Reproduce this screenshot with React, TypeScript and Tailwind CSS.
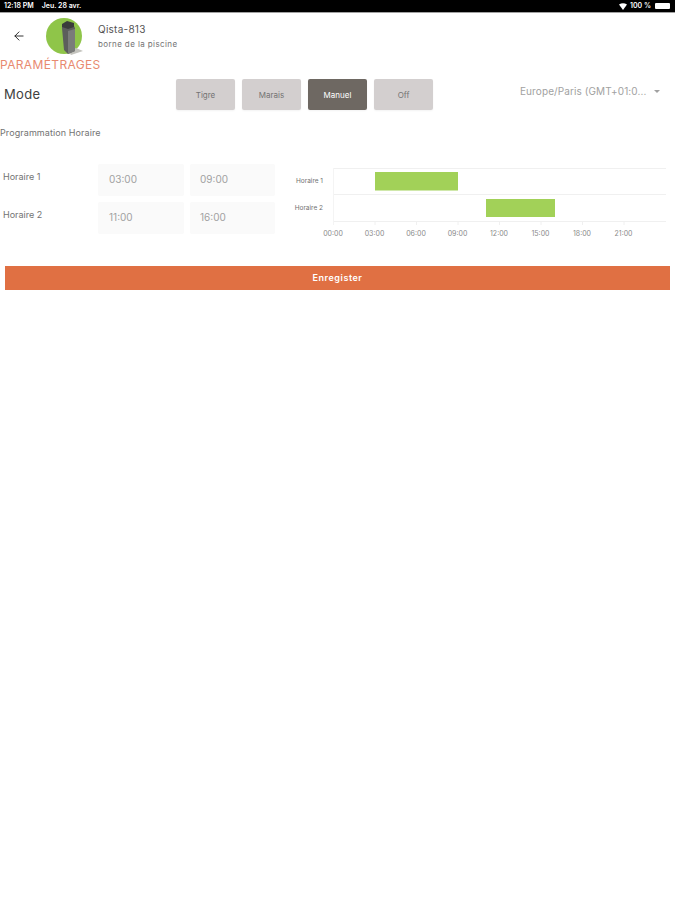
import { ArrowLeft } from "lucide-react";

const modes = [
  { label: "Tigre", active: false },
  { label: "Marais", active: false },
  { label: "Manuel", active: true },
  { label: "Off", active: false },
];

const slots = [
  { label: "Horaire 1", start: "03:00", end: "09:00" },
  { label: "Horaire 2", start: "11:00", end: "16:00" },
];

const ticks = ["00:00", "03:00", "06:00", "09:00", "12:00", "15:00", "18:00", "21:00"];

const StatusBar = () => (
  <div className="h-[13px] bg-black border-b border-neutral-400 flex items-center justify-between pl-1 pr-[5px] text-white text-[7px] font-semibold">
    <div className="flex gap-2">
      <span>12:18 PM</span>
      <span>Jeu. 28 avr.</span>
    </div>
    <div className="flex items-center gap-[3px]">
      <svg width="8" height="7" viewBox="0 0 8 7">
        <path d="M0 1.5 Q4 -1 8 1.5 L4 7 Z" fill="#fff" />
      </svg>
      <span>100 %</span>
      <div className="w-[15px] h-[6px] bg-white rounded-[1px] ml-[1px]" />
    </div>
  </div>
);

const Tower = () => (
  <div className="relative w-9 h-9 rounded-full bg-[#8fc549]">
    <svg className="absolute left-[14px] top-[3px]" width="24" height="36" viewBox="0 0 24 36">
      <path d="M8 30 L16 27 L23 30 L11 34 Z" fill="#c4c4be" />
      <path d="M2 7 L2 4 L13 3 L15 7 L15 30 L8 33 L4 29 Z" fill="#5c5e5c" />
      <path d="M8 10 L15 8 L15 30 L8 33 Z" fill="#7a7c7a" />
      <path d="M2 3 L7 0 L14 2 L14 6 L8 8 L2 6 Z" fill="#3a3c3b" />
    </svg>
  </div>
);

const Chart = () => (
  <svg width="380" height="76" viewBox="0 0 380 76" className="shrink-0 font-['Inter',sans-serif]">
    {[0, 26, 53].map((y) => (
      <line key={y} x1="42" x2="375" y1={y + 0.5} y2={y + 0.5} stroke="#f0f0f0" />
    ))}
    {[0, 1, 2, 3, 4, 5, 6, 7].map((i) => (
      <line key={i} x1={42.5 + i * 41.5} x2={42.5 + i * 41.5} y1="53" y2="57" stroke="#f0f0f0" />
    ))}
    <line x1="42.5" x2="42.5" y1="0" y2="57" stroke="#f4f4f4" />
    <rect x="84" y="4" width="83" height="18.5" fill="#a2d158" />
    <rect x="195" y="31" width="69" height="18" fill="#a2d158" />
    <text x="32" y="15" textAnchor="end" fontSize="6.5" fill="#707070">Horaire 1</text>
    <text x="32" y="42" textAnchor="end" fontSize="6.5" fill="#707070">Horaire 2</text>
    {ticks.map((t, i) => (
      <text key={t} x={42 + i * 41.5} y="68" textAnchor="middle" fontSize="7" fill="#8a8a8a">
        {t}
      </text>
    ))}
  </svg>
);

const App = () => {
  return (
    <div className="w-[675px] h-[900px] bg-white overflow-hidden font-['Inter',sans-serif]">
      <StatusBar />

      <div className="flex items-center h-[45px] pt-[1px]">
        <ArrowLeft className="ml-3 text-neutral-900 -mt-[1px]" size={14} strokeWidth={1.5} />
        <div className="ml-[20px] mr-4">
          <Tower />
        </div>
        <div className="flex flex-col gap-[3px] -mt-[1px]">
          <span className="text-[10px] leading-[14px] text-neutral-600 tracking-wide">Qista-813</span>
          <span className="text-[8px] leading-[10px] text-neutral-500 tracking-[0.05em]">borne de la piscine</span>
        </div>
      </div>

      <p className="text-[12px] leading-[14px] text-[#e88a70] tracking-[0.03em]">PARAMÉTRAGES</p>

      <div className="flex items-center h-[31px] mt-[7px]">
        <span className="w-[176px] pl-1 text-[13px] text-neutral-700 tracking-wide">Mode</span>
        <div className="flex gap-[7px]">
          {modes.map((m) => (
            <div
              key={m.label}
              className={
                m.active
                  ? "w-[59px] h-[31px] rounded-[2px] bg-[#6e6862] text-white text-[8px] flex items-center justify-center shadow-xs"
                  : "w-[59px] h-[31px] rounded-[2px] bg-[#d3cfcf] text-neutral-500 text-[8px] flex items-center justify-center shadow-xs"
              }
            >
              {m.label}
            </div>
          ))}
        </div>
        <div className="ml-[87px] flex items-center gap-2 -mt-[6px]">
          <span className="text-[10px] text-neutral-400 whitespace-nowrap tracking-[0.01em]">Europe/Paris (GMT+01:0...</span>
          <div className="w-0 h-0 border-x-[3px] border-x-transparent border-t-[3px] border-t-neutral-400" />
        </div>
      </div>

      <p className="mt-[17px] text-[9px] leading-[12px] text-neutral-500 tracking-[0.01em]">Programmation Horaire</p>

      <div className="flex mt-[25px]">
        <div className="flex flex-col gap-[6px] w-[291px] shrink-0 pl-[3px]">
          {slots.map((s) => (
            <div key={s.label} className="flex">
              <span className="w-[95px] text-[9px] leading-[12px] text-neutral-500 mt-[7px]">{s.label}</span>
              <div className="flex gap-[6px]">
                <div className="w-[86px] h-[32px] rounded-[2px] bg-[#fafafa] flex items-center pl-[11px] pb-[1px] text-[10px] text-neutral-400">
                  {s.start}
                </div>
                <div className="w-[85px] h-[32px] rounded-[2px] bg-[#fafafa] flex items-center pl-[10px] pb-[1px] text-[10px] text-neutral-400">
                  {s.end}
                </div>
              </div>
            </div>
          ))}
        </div>
        <div className="mt-[4px]">
          <Chart />
        </div>
      </div>

      <div className="mx-[5px] mt-[22px] h-[24px] bg-[#e07043] flex items-center justify-center text-white text-[9px] font-semibold tracking-[0.06em] w-[665px]">
        Enregister
      </div>
    </div>
  );
};

export default App;
